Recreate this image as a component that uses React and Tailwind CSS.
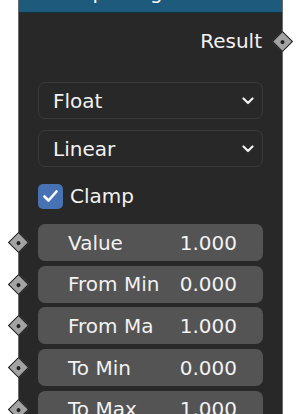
import React from 'react';

const Socket = ({ className }) => (
  <div className={`absolute w-[22px] h-[22px] flex items-center justify-center ${className}`}>
    <div className="w-[15px] h-[15px] rotate-45 bg-[#a3a3a3] border-[1.5px] border-[#1a1a1a] flex items-center justify-center">
      <div className="w-[4px] h-[4px] rounded-full bg-[#222]" />
    </div>
  </div>
);

const Chevron = () => (
  <svg width="12" height="8" viewBox="0 0 12 8" fill="none">
    <path d="M1.5 1.5 6 6l4.5-4.5" stroke="#f0f0f0" strokeWidth="2.2" strokeLinecap="round" strokeLinejoin="round" />
  </svg>
);

const Dropdown = ({ label }) => (
  <div className="h-[37px] rounded-[7px] border border-[#3a3a3a] bg-[#282828] flex items-center justify-between pl-[14px] pr-[8px]">
    <span className="whitespace-nowrap">{label}</span>
    <Chevron />
  </div>
);

const Field = ({ label, value }) => (
  <div className="relative h-[37px] rounded-[7px] bg-[#545454] flex items-center justify-between pl-[30px] pr-[26px]">
    <Socket className="left-[-30.5px] top-[7.5px]" />
    <span className="whitespace-nowrap">{label}</span>
    <span className="whitespace-nowrap">{value}</span>
  </div>
);

export default function App() {
  const fields = [
    ['Value', '1.000'],
    ['From Min', '0.000'],
    ['From Ma', '1.000'],
    ['To Min', '0.000'],
    ['To Max', '1.000'],
  ];

  return (
    <div className="w-[303px] h-[414px] bg-white overflow-hidden" style={{ fontFamily: '"DejaVu Sans", sans-serif' }}>
      <div className="ml-[18px] w-[265px] h-full bg-[#282828] border-x border-[#6a6a6a] text-[20px] text-[#f2f2f2] leading-[24px]">
        {/* header */}
        <div className="h-[13px] bg-[#1d5a7b] border-b border-[#12303f] overflow-hidden pl-[44px]">
          <div className="mt-[-18px] leading-[20px] text-white whitespace-nowrap">Map Range</div>
        </div>

        <div className="px-[19px] pt-[13px]">
          <div className="relative h-[30px] flex items-center justify-end pr-[1px]">
            <span>Result</span>
            <Socket className="right-[-30.5px] top-[4px]" />
          </div>

          <div className="mt-[26px] flex flex-col gap-[11px]">
            <Dropdown label="Float" />
            <Dropdown label="Linear" />
          </div>

          <div className="mt-[16px] h-[26px] flex items-center gap-[7px]">
            <div className="w-[25px] h-[25px] rounded-[5px] bg-[#4772b3] flex items-center justify-center">
              <svg width="17" height="14" viewBox="0 0 17 14" fill="none">
                <path d="M2.5 7.5 6.5 11.5 14.5 2.5" stroke="#fff" strokeWidth="2.6" strokeLinecap="round" strokeLinejoin="round" />
              </svg>
            </div>
            <span>Clamp</span>
          </div>

          <div className="mt-[15px] flex flex-col gap-[4.7px]">
            {fields.map(([l, v]) => (
              <Field key={l} label={l} value={v} />
            ))}
          </div>
        </div>
      </div>
    </div>
  );
}
